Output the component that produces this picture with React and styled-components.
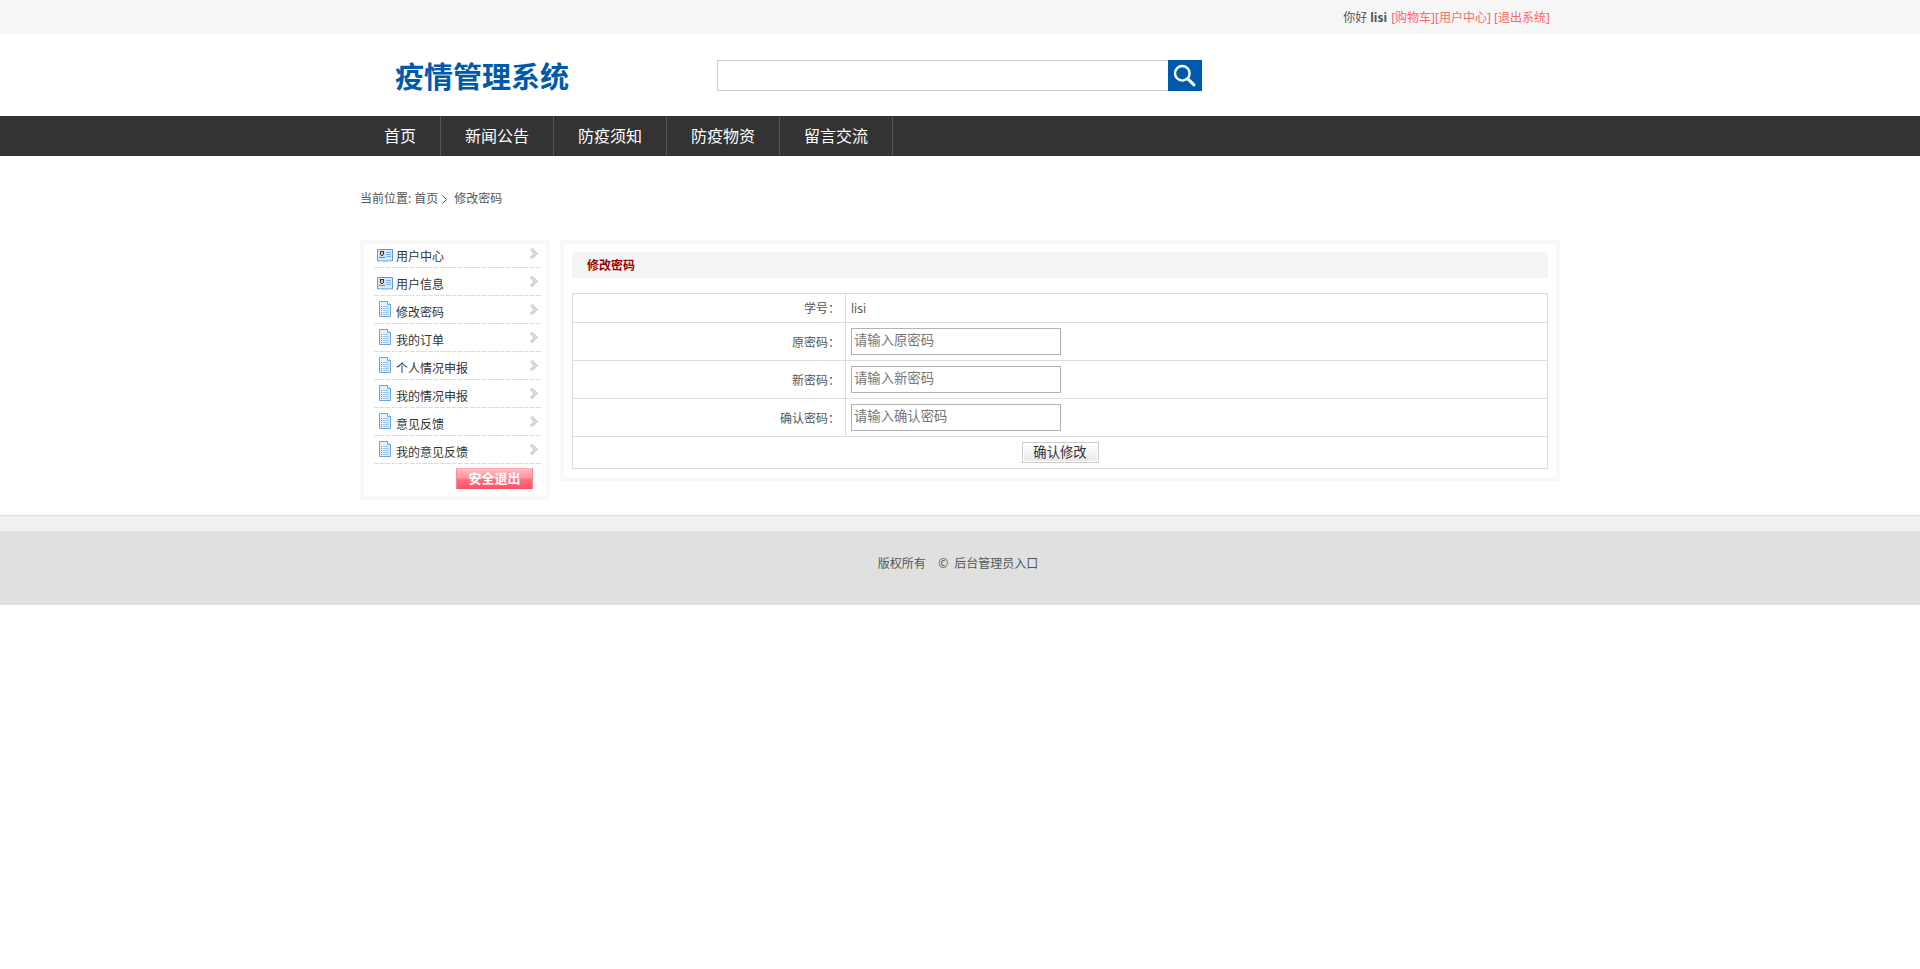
import React from "react"
import styled, { createGlobalStyle } from "styled-components"

const GlobalStyle = createGlobalStyle`
  * {
    box-sizing: border-box;
  }

  body {
    margin: 0;
    background: #fff;
    color: #555;
    font: 12px/24px "Noto Sans", "Noto Sans CJK SC", sans-serif;
  }

  a {
    color: inherit;
    text-decoration: none;
  }
`

const Container = styled.div`
  width: 1200px;
  margin: 0 auto;
`

const TopBar = styled.div`
  height: 34px;
  background: #f6f6f6;
`

const TopLinks = styled(Container)`
  padding-right: 10px;
  line-height: 36px;
  text-align: right;
  white-space: pre;

  a {
    color: #ff6666;
  }

  b {
    margin-right: 1px;
  }
`

const Header = styled(Container)`
  display: flex;
  height: 82px;
  padding: 26px 0 0 35px;
`

const Logo = styled.h1`
  width: 322px;
  margin: 0;
  color: #005aab;
  font-size: 29px;
  font-weight: bold;
  line-height: 33px;
`

const SearchForm = styled.form`
  display: flex;
  height: 31px;
`

const SearchInput = styled.input`
  width: 451px;
  border: 1px solid #ccc;
  border-right: 0;
  outline: none;
`

const SearchButton = styled.button`
  width: 34px;
  padding: 0;
  border: 0;
  background: #005aab;

  svg {
    display: block;
  }
`

const NavBar = styled.nav`
  height: 40px;
  background: #333;
`

const NavList = styled(Container)`
  display: flex;
`

const NavLink = styled.a`
  padding: 0 24px;
  border-right: 1px solid #555;
  font-size: 16px;
  line-height: 41px;
  height: 40px;

  &:first-child {
    line-height: 40px;
  }

  && {
    color: #fff;
  }
`

const Breadcrumb = styled(Container)`
  display: flex;
  align-items: center;
  height: 84px;
  padding-top: 2px;

  svg {
    margin: 0 7px 0 4px;
  }
`

const Content = styled(Container)`
  display: flex;
  align-items: flex-start;
  gap: 10px;
  height: 275px;
`

const Panel = styled.div`
  border: 4px solid #f8f8f8;
`

const Sidebar = styled(Panel)`
  width: 190px;
  height: 260px;
  padding: 0 5px 0 10px;
`

const SideItem = styled.a`
  display: flex;
  align-items: flex-end;
  height: 28px;
  padding: 0 3px;
  background: repeating-linear-gradient(90deg, #ddd 0 5px, #fff 5px 6px) left
    bottom / 100% 1px no-repeat;
  line-height: 22px;

  &:first-child {
    height: 24px;
  }

  && {
    color: #333;
  }
`

const ItemIcon = styled.span`
  width: 19px;
  padding-bottom: ${props => (props.$card ? 6 : 7)}px;

  svg {
    display: block;
  }
`

const ItemArrow = styled.span`
  margin-left: auto;
  padding-bottom: 9px;

  svg {
    display: block;
  }
`

const LogoutButton = styled.button`
  display: block;
  width: 77px;
  height: 21px;
  margin: 4px 8px 0 auto;
  padding: 0 0 2px;
  border: 1px solid;
  border-color: #ffa9b2 #ff8592 #ff4d62;
  border-radius: 1px;
  background: linear-gradient(#ffbcc2, #ff949e 48%, #ff7483 52%, #ff5268);
  color: #fff;
  font: bold 13px/17px "Noto Sans CJK SC", sans-serif;
`

const Main = styled(Panel)`
  width: 1000px;
  height: 241px;
  padding: 8px;
`

const Title = styled.h2`
  height: 26px;
  margin: 0 0 15px;
  padding-left: 15px;
  background: #f5f5f5;
  color: #900;
  font-size: 12px;
  line-height: 27px;
`

const FormTable = styled.div`
  border: 1px solid #dcdcdc;
  border-bottom: 0;
`

const Row = styled.div`
  display: flex;
  height: ${props => props.$height}px;
  border-bottom: 1px solid #dcdcdc;
`

const Label = styled.label`
  display: flex;
  align-items: center;
  justify-content: flex-end;
  width: 273px;
  padding: 2px 5px 0 0;
  border-right: 1px solid #dcdcdc;
`

const Value = styled.div`
  display: flex;
  align-items: center;
  padding-left: 5px;
`

const PlainValue = styled(Value)`
  padding-top: 1px;
`

const Input = styled.input`
  width: 210px;
  height: 27px;
  padding: 0 2px 3px;
  border: 1px solid #b2b2b2;
  font: 13.333px "Noto Sans", "Noto Sans CJK SC", sans-serif;

  &::placeholder {
    color: #757575;
  }
`

const Actions = styled.div`
  display: flex;
  align-items: center;
  justify-content: center;
  width: 100%;
`

const SubmitButton = styled.button`
  width: 77px;
  height: 21px;
  padding: 0 0 1px;
  border: 1px solid #ccc;
  background: linear-gradient(#fff, #e8e8e8);
  box-shadow: inset 0 0 0 1px #fff;
  color: #333;
  font: 13.333px/18px "Noto Sans", "Noto Sans CJK SC", sans-serif;
`

const Footer = styled.footer`
  height: 90px;
  padding: 21px 4px 0 0;
  border-top: 1px solid #ddd;
  background: linear-gradient(#f1f1f1 15px, #e0e0e0 15px);
  line-height: 54px;
  text-align: center;
  white-space: pre;
`

const SearchIcon = () => (
  <svg width="34" height="31" fill="none" stroke="#fff">
    <circle cx="14.3" cy="13.3" r="7.3" strokeWidth="2.4" />
    <path d="M19.8 18.8L26 24.8" strokeWidth="3" strokeLinecap="round" />
  </svg>
)

const CardIcon = () => (
  <svg width="16" height="13">
    <path
      d="M.5 .5h15v11.5h-2l-1-1-1 1h-7l-1-1-1 1h-2z"
      fill="#d8eafa"
      stroke="#5f9bd5"
    />
    <path d="M2 2h6v7H2z" fill="#c5def5" />
    <path d="M3 2h4v1H3zM3 3h1v3H3zM6 3h1v3H6zM4 6h2v1H4z" fill="#2f3b48" />
    <path d="M4 3h2v3H4z" fill="#f4c27a" />
    <path d="M2 8h6v1H2z" fill="#5b94cf" />
    <path d="M9 3.5h5M9 5.5h5M9 7.5h5" stroke="#7fb1df" />
  </svg>
)

const DocIcon = () => (
  <svg width="16" height="16">
    <path d="M2.5 .5h8l3 3v12h-11z" fill="#e2f1fd" stroke="#6ca6dc" />
    <path d="M10.5 .5v3h3" fill="#fff" stroke="#6ca6dc" />
    <path d="M4 5.5h1M4 7.5h1M4 9.5h1M4 11.5h1M4 13.5h1" stroke="#55a36c" />
    <path d="M6 5.5h6M6 7.5h6M6 9.5h6M6 11.5h6M6 13.5h6" stroke="#a0c5e5" />
  </svg>
)

const ArrowIcon = () => (
  <svg width="8" height="11">
    <path
      d="M.5 1.5l2-1 5 5-5 5-2-1 3.2-4z"
      fill="#ddd"
      stroke="#b5b5b5"
      strokeWidth=".7"
    />
  </svg>
)

const navItems = ["首页", "新闻公告", "防疫须知", "防疫物资", "留言交流"]

const sideItems = [
  { text: "用户中心", card: true },
  { text: "用户信息", card: true },
  { text: "修改密码" },
  { text: "我的订单" },
  { text: "个人情况申报" },
  { text: "我的情况申报" },
  { text: "意见反馈" },
  { text: "我的意见反馈" },
]

const fields = [
  { name: "oldPassword", label: "原密码", hint: "请输入原密码" },
  { name: "newPassword", label: "新密码", hint: "请输入新密码" },
  { name: "confirmPassword", label: "确认密码", hint: "请输入确认密码" },
]

const App = () => {
  return (
    <>
      <GlobalStyle />
      <TopBar>
        <TopLinks>
          你好 <b>lisi</b> <a href="#">[购物车]</a>
          <a href="#">[用户中心]</a> <a href="#">[退出系统]</a>
        </TopLinks>
      </TopBar>

      <Header>
        <Logo>疫情管理系统</Logo>
        <SearchForm>
          <SearchInput name="keyword" />
          <SearchButton type="button">
            <SearchIcon />
          </SearchButton>
        </SearchForm>
      </Header>

      <NavBar>
        <NavList>
          {navItems.map(item => (
            <NavLink href="#" key={item}>
              {item}
            </NavLink>
          ))}
        </NavList>
      </NavBar>

      <Breadcrumb>
        <span>
          当前位置: <a href="#">首页</a>
        </span>
        <svg width="5" height="9" fill="none" stroke="#555">
          <path d="M.5 .5l4 4-4 4" />
        </svg>
        <span>修改密码</span>
      </Breadcrumb>

      <Content>
        <Sidebar>
          {sideItems.map(item => (
            <SideItem href="#" key={item.text}>
              <ItemIcon $card={item.card}>
                {item.card ? <CardIcon /> : <DocIcon />}
              </ItemIcon>
              {item.text}
              <ItemArrow>
                <ArrowIcon />
              </ItemArrow>
            </SideItem>
          ))}
          <LogoutButton type="button">安全退出</LogoutButton>
        </Sidebar>

        <Main>
          <Title>修改密码</Title>
          <FormTable>
            <Row $height={29}>
              <Label>学号：</Label>
              <PlainValue>lisi</PlainValue>
            </Row>
            {fields.map(field => (
              <Row $height={38} key={field.name}>
                <Label htmlFor={field.name}>{field.label}：</Label>
                <Value>
                  <Input
                    type="password"
                    id={field.name}
                    placeholder={field.hint}
                  />
                </Value>
              </Row>
            ))}
            <Row $height={32}>
              <Actions>
                <SubmitButton type="button">确认修改</SubmitButton>
              </Actions>
            </Row>
          </FormTable>
        </Main>
      </Content>

      <Footer>
        版权所有{"    "}©{"  "}
        <a href="#">后台管理员入口</a>
      </Footer>
    </>
  )
}

export default App
